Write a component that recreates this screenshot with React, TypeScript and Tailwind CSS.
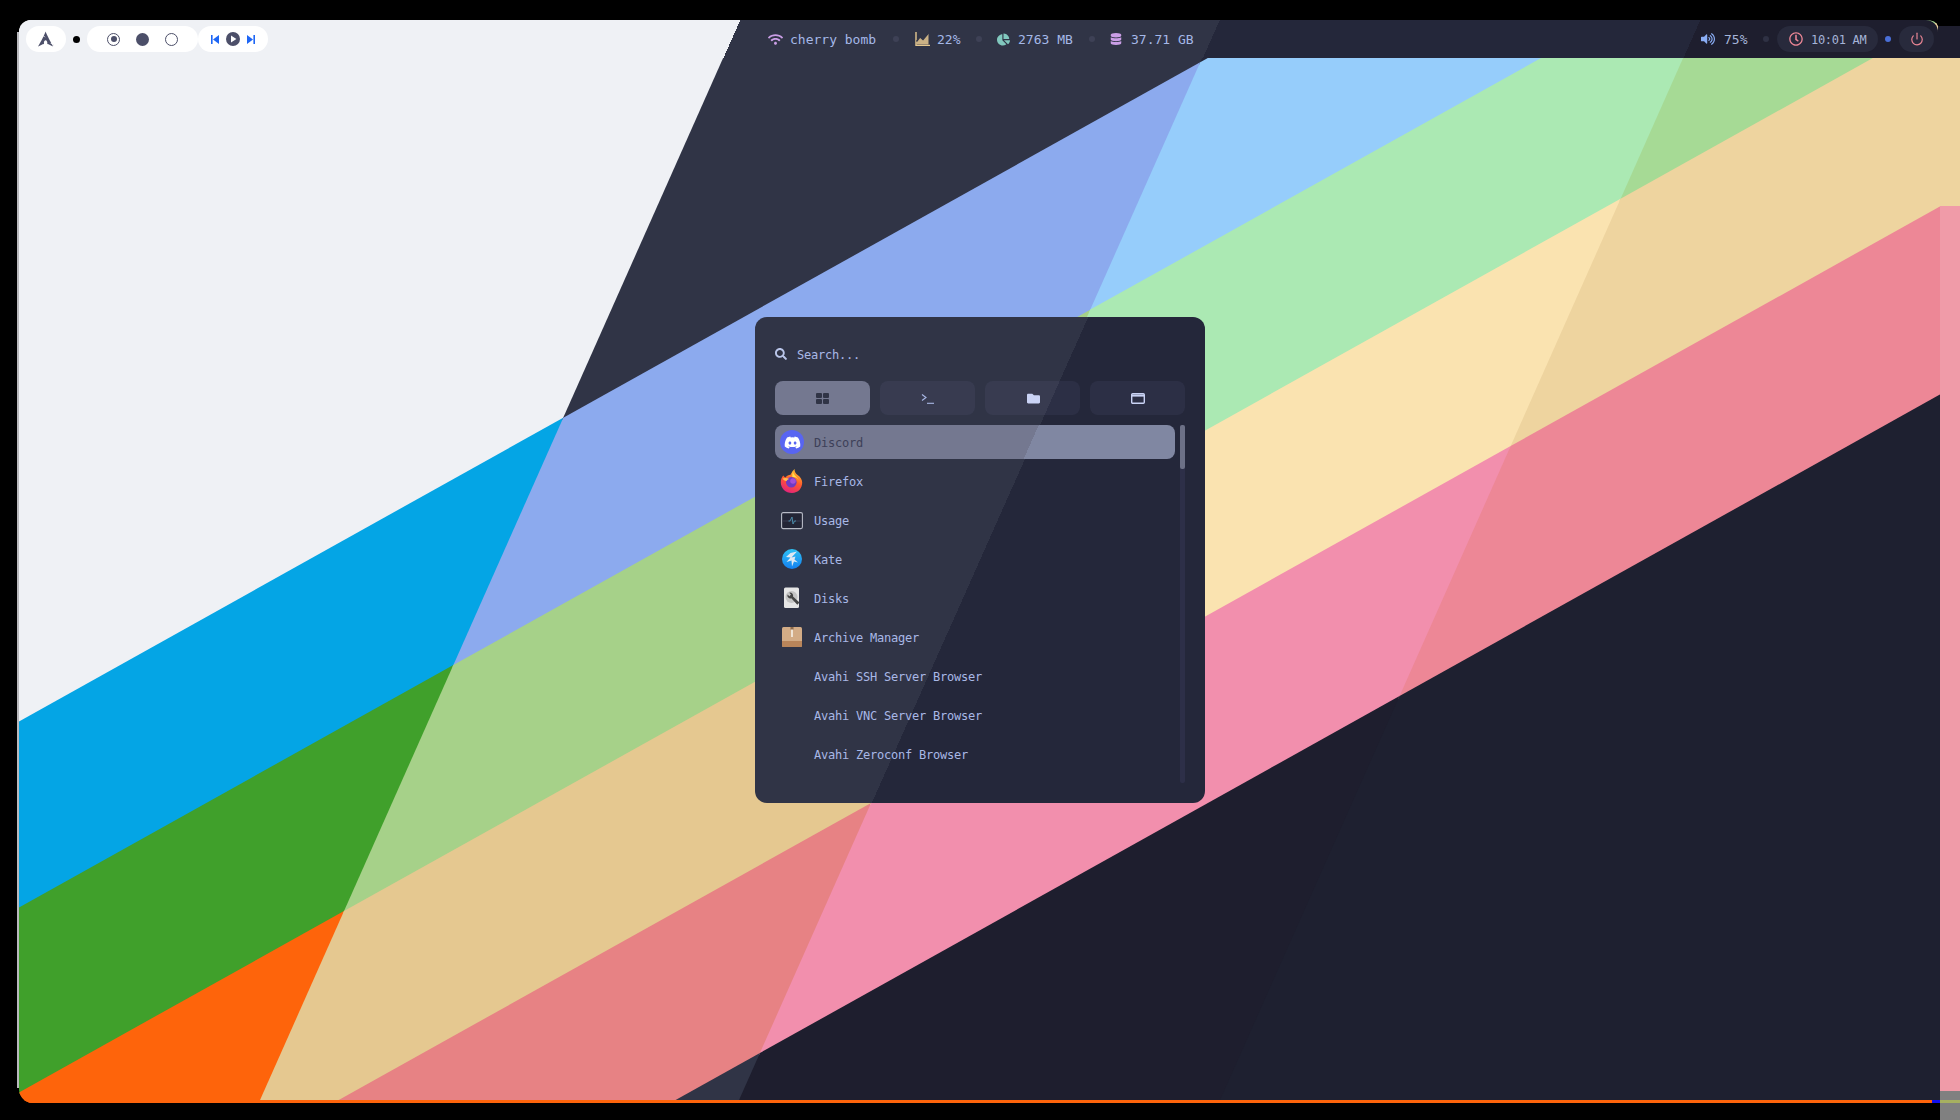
import { FaChartPie, FaDatabase, FaFolder, FaRegClock, FaSearch, FaVolumeUp, FaWifi, FaDiscord } from "react-icons/fa";
import { SiArchlinux } from "react-icons/si";
import { Power } from "lucide-react";

const SLOPE = 0.558;
const SHEAR = 0.4444;
const bandEdges = [-2000, 732, 918, 1103, 1289, 1477, 4000];

const regions = [
  { x0: -2000, x1: 740, colors: ["#eff1f5", "#04a5e5", "#40a02b", "#fe640b", "#e64553", "#eff1f5"] },
  { x0: 740, x1: 1219, colors: ["#303446", "#8caaee", "#a6d189", "#e5c890", "#e78284", "#303446"] },
  { x0: 1219, x1: 1700, colors: ["#24273a", "#96cdfb", "#abe9b3", "#fae3b0", "#f28fad", "#1e1e2e"] },
  { x0: 1700, x1: 4000, colors: ["#1e1e2e", "#8aadf4", "#a6da95", "#eed49f", "#ed8796", "#1e2030"] },
];

// where a region edge (x at y=20) crosses a band edge (y at x=0)
function corner(x0: number, c: number) {
  const x = (x0 - SHEAR * (c - 20)) / (1 - SHEAR * SLOPE);
  return `${x},${c - SLOPE * x}`;
}

function Wallpaper() {
  return (
    <svg className="absolute inset-0" width="1960" height="1120" viewBox="0 0 1960 1120">
      <defs>
        <clipPath id="screen">
          <path d="M19 32a12 12 0 0 1 12-12H1926Q1936 20 1938 26H1960V1120H1940V1103H32a14 14 0 0 1-13-13Z" />
        </clipPath>
      </defs>
      <g clipPath="url(#screen)">
        {/* each piece runs 2px under the next one, so no seam shows */}
        {regions.map((r, i) =>
          r.colors.map((c, j) => {
            const top = bandEdges[j];
            const bottom = bandEdges[j + 1] + 2;
            return (
              <polygon
                key={`${i}-${j}`}
                fill={c}
                points={`${corner(r.x0, top)} ${corner(r.x1 + 2, top)} ${corner(r.x1 + 2, bottom)} ${corner(r.x0, bottom)}`}
              />
            );
          }),
        )}
        {/* edge of the second monitor */}
        <rect x="1938" y="26" width="22" height="32" fill="#1e1e2e" />
        <rect x="1940" y="58" width="20" height="148" fill="#eed49f" />
        <rect x="1940" y="206" width="20" height="885" fill="#f09ba8" />
        <rect x="1940" y="1091" width="20" height="29" fill="#808080" />
        <rect x="1940" y="1100" width="20" height="3" fill="#a6b060" />
        <rect x="19" y="1100" width="1913" height="3" fill="#fe640b" />
        <rect x="1932" y="1100" width="8" height="7" fill="#1010f0" />
      </g>
      <rect x="17" y="32" width="2" height="1056" fill="#b9b9bd" />
    </svg>
  );
}

function Dot({ className }: { className: string }) {
  return <span className={`h-[6px] w-[6px] shrink-0 rounded-full ${className}`} />;
}

function ChartIcon() {
  return (
    <svg width="15" height="14" viewBox="0 0 15 14" fill="none">
      <path d="M1.500 9 5 5l3 2.500L13.500 1.500V12.500h-12Z" fill="#e5c890" fillOpacity="0.85" />
      <path d="M1 0v13.500h14" stroke="#e5c890" strokeWidth="1.400" />
      <path d="M1.500 9.500 5 5l3 2.500L13.500 1" stroke="#303446" strokeWidth="1.300" />
    </svg>
  );
}

function SkipIcon({ flip }: { flip?: boolean }) {
  return (
    <svg width="8" height="9" viewBox="0 0 8 9" className={flip ? "-scale-x-100" : ""}>
      <rect x="0" y="0" width="1.600" height="9" fill="#1e66f5" />
      <path d="M8 0v9L2 4.500Z" fill="#1e66f5" />
    </svg>
  );
}

function LeftModules() {
  return (
    <div className="flex items-center">
      <div className="flex h-[26px] w-[40px] items-center justify-center rounded-full bg-white">
        <SiArchlinux className="text-[16px] text-[#4c4f69]" />
      </div>
      <span className="ml-[7px] mr-[7px] h-[7px] w-[7px] rounded-full bg-black" />
      <div className="flex h-[26px] w-[111px] items-center justify-center gap-[16px] rounded-full bg-white">
        <span className="flex h-[13px] w-[13px] items-center justify-center rounded-full border-[1.5px] border-[#4c4f69]">
          <span className="h-[6px] w-[6px] rounded-full bg-[#4c4f69]" />
        </span>
        <span className="h-[13px] w-[13px] rounded-full bg-[#4c4f69]" />
        <span className="h-[13px] w-[13px] rounded-full border-[1.5px] border-[#4c4f69]" />
      </div>
      <div className="flex h-[26px] w-[70px] items-center justify-center gap-[7px] rounded-full bg-white">
        <SkipIcon />
        <svg width="14" height="14" viewBox="0 0 14 14">
          <circle cx="7" cy="7" r="7" fill="#4c4f69" />
          <path d="M5 3.600v6.800L10.400 7Z" fill="#fff" />
        </svg>
        <SkipIcon flip />
      </div>
    </div>
  );
}

function CenterModules() {
  return (
    <div className="ml-[500px] flex items-center whitespace-nowrap text-[#a5b8e8]">
      <FaWifi className="mr-[7px] text-[15px] text-[#ca9ee6]" />
      <span className="w-[87px] pt-[1px]">cherry bomb</span>
      <Dot className="mx-[16px] bg-[#3e4156]" />
      <ChartIcon />
      <span className="ml-[7px] w-[24px] pt-[1px]">22%</span>
      <Dot className="mx-[15px] bg-[#3e4156]" />
      <FaChartPie className="text-[13px] text-[#81c8be]" />
      <span className="ml-[8px] w-[56px] pt-[1px]">2763 MB</span>
      <Dot className="mx-[15px] bg-[#3e4156]" />
      <FaDatabase className="text-[12px] text-[#ca9ee6]" />
      <span className="ml-[9px] pt-[1px]">37.71 GB</span>
    </div>
  );
}

function RightModules() {
  return (
    <div className="ml-auto flex items-center whitespace-nowrap text-[#a5b4d8]">
      <FaVolumeUp className="mr-[9px] text-[14px] text-[#8aadf4]" />
      <span className="w-[24px] pt-[1px]">75%</span>
      <Dot className="ml-[15px] mr-[8px] bg-[#2f3144]" />
      <div className="flex h-[26px] w-[101px] items-center gap-[8px] rounded-full bg-[#282a3c] pl-[12px]">
        <FaRegClock className="text-[14px] text-[#ed8796]" />
        <span className="pt-[1px] text-[12px] tracking-[-0.3px]">10:01 AM</span>
      </div>
      <Dot className="ml-[7px] mr-[8px] bg-[#4a6fd8]" />
      <div className="flex h-[26px] w-[35px] items-center justify-center rounded-full bg-[#282a3c]">
        <Power size={14} color="#ed8796" strokeWidth={2} />
      </div>
    </div>
  );
}

function FirefoxIcon() {
  return (
    <svg width="24" height="24" viewBox="0 0 24 24">
      <defs>
        <linearGradient id="ff" x1="0.7" y1="0" x2="0.3" y2="1">
          <stop offset="0" stopColor="#ffc22e" />
          <stop offset="0.5" stopColor="#ff5a2c" />
          <stop offset="1" stopColor="#e2207f" />
        </linearGradient>
      </defs>
      <path
        d="M12 24C5.500 24 .8 19.200.8 13.200c0-2.600.9-5 2.400-6.700.6 1 1.400 1.600 2.300 1.900 1.200-1.500 3.200-2.400 5-2.600 1-1.900 2.500-4.300 4.100-5.800-.2 2.500.8 4.400 3 6 2.900 2 4.600 4.600 4.600 7.600C22.200 19.400 18.200 24 12 24Z"
        fill="url(#ff)"
      />
      <path d="M13 1.500c-.2 2.400 1 4.400 3.200 6.300 1 1 2 2.300 2.600 3.700-1.500-2.600-3.800-3.700-6.500-3.400.1-2.600.2-4.500.7-6.600Z" fill="#ffe14d" />
      <circle cx="11.300" cy="13.300" r="5.300" fill="#6e3bc4" />
      <circle cx="13" cy="12" r="2.800" fill="#a24fd8" />
      <path d="M2.500 9.500c2-.8 4.500-.8 6.800.4-1.300.3-2.300 1-2.700 2-1.500.3-3-.8-4.100-2.400Z" fill="#ffbd4f" />
    </svg>
  );
}

function UsageIcon() {
  return (
    <svg width="22" height="18" viewBox="0 0 22 18" className="translate-y-[1px]">
      <rect x="0.600" y="0.600" width="20.800" height="16" rx="1.500" fill="#232536" stroke="#b7bac6" strokeWidth="1.100" />
      <path d="M1 9h20" stroke="#3a3d52" strokeWidth="1" />
      <path d="M7.500 9H9l2-4 1 7 1.500-3h1.500" fill="none" stroke="#4b8aa8" strokeWidth="1" />
    </svg>
  );
}

function KateIcon() {
  return (
    <svg width="20" height="20" viewBox="0 0 20 20">
      <defs>
        <linearGradient id="kate" x1="0" y1="0" x2="0" y2="1">
          <stop offset="0" stopColor="#2fc2f5" />
          <stop offset="1" stopColor="#1480ef" />
        </linearGradient>
      </defs>
      <circle cx="10" cy="10" r="10" fill="url(#kate)" />
      <path d="M15 2.500 8.500 4 4 8l4.500.5L4.500 13l5-1.500.5 6 2-5 4 1-3.500-3 1-3-4 1Z" fill="#dfe8f2" />
    </svg>
  );
}

function DisksIcon() {
  return (
    <svg width="18" height="22" viewBox="0 0 18 22">
      <rect x="1" y="0.500" width="15" height="20.500" rx="1.500" fill="#e6e6e6" />
      <circle cx="8.500" cy="10" r="6" fill="#c4c4c4" />
      <path d="M4.500 7.500a3 3 0 0 0 3.800 3.800l6 6.500 2.200-2.200-6.500-6A3 3 0 0 0 6.200 5.800L8 7.600 6.400 9.200Z" fill="#454545" />
    </svg>
  );
}

function ArchiveIcon() {
  return (
    <svg width="20" height="20" viewBox="0 0 20 20">
      <rect width="20" height="20" rx="1.500" fill="#d3ac86" />
      <path d="M0 14h20v4.500a1.500 1.500 0 0 1-1.500 1.500h-17A1.500 1.500 0 0 1 0 18.500Z" fill="#b9855a" />
      <rect x="9" y="0" width="2" height="10" fill="#efe3d4" />
      <rect x="8.500" y="0" width="3" height="2.500" fill="#8d6a4a" />
    </svg>
  );
}

const apps = [
  { name: "Discord", icon: <span className="flex h-[24px] w-[24px] items-center justify-center rounded-full bg-[#5865f2]"><FaDiscord className="text-[17px] text-white" /></span> },
  { name: "Firefox", icon: <FirefoxIcon /> },
  { name: "Usage", icon: <UsageIcon /> },
  { name: "Kate", icon: <KateIcon /> },
  { name: "Disks", icon: <DisksIcon /> },
  { name: "Archive Manager", icon: <ArchiveIcon /> },
  { name: "Avahi SSH Server Browser", icon: null },
  { name: "Avahi VNC Server Browser", icon: null },
  { name: "Avahi Zeroconf Browser", icon: null },
];

function Launcher() {
  return (
    <div className="absolute inset-0 flex items-center justify-center">
      <div className="flex h-[486px] w-[450px] flex-col rounded-[12px] bg-[linear-gradient(114deg,#303446_50%,#24273a_50%)] px-[20px] text-[12px] tracking-[-0.22px] text-[#a9b8e6]">
        <div className="flex h-[64px] shrink-0 items-center pt-[10px]">
          <FaSearch className="text-[12px] text-[#bac6ea]" />
          <span className="ml-[10px] pt-[2px]">Search...</span>
        </div>
        <div className="grid shrink-0 grid-cols-4 gap-[10px]">
          <div className="flex h-[34px] items-center justify-center rounded-[8px] bg-[#747890]">
            <svg width="13" height="11" viewBox="0 0 13 11" fill="#303446">
              <rect width="6" height="5" rx="1" />
              <rect x="7" width="6" height="5" rx="1" />
              <rect y="6" width="6" height="5" rx="1" />
              <rect x="7" y="6" width="6" height="5" rx="1" />
            </svg>
          </div>
          <div className="flex h-[34px] items-center justify-center rounded-[8px] bg-[#b4befe]/[0.06]">
            <svg width="13" height="11" viewBox="0 0 13 11" fill="none" stroke="#a9b8e6" strokeWidth="1.100">
              <path d="M1 1.500 5 4.500 1 7.500" />
              <path d="M6 10.300h7" />
            </svg>
          </div>
          <div className="flex h-[34px] items-center justify-center rounded-[8px] bg-[#b4befe]/[0.06]">
            <FaFolder className="ml-[1px] text-[13px] text-[#cad3f5]" />
          </div>
          <div className="flex h-[34px] items-center justify-center rounded-[8px] bg-[#b4befe]/[0.06]">
            <svg width="14" height="11" viewBox="0 0 14 11" fill="none">
              <rect x="0.700" y="0.700" width="12.600" height="9.600" rx="1" stroke="#cad3f5" strokeWidth="1.400" />
              <path d="M1 2.600h12" stroke="#cad3f5" strokeWidth="2" />
            </svg>
          </div>
        </div>
        <div className="mt-[10px] flex min-h-0 gap-[5px]">
          <div className="flex w-[400px] flex-col gap-[5px]">
            {apps.map((app, i) => (
              <div
                key={app.name}
                className={
                  i === 0
                    ? "flex h-[34px] items-center rounded-[8px] bg-[linear-gradient(114deg,#747890_241px,#8087a2_241px)] text-[#3d4058]"
                    : "flex h-[34px] items-center rounded-[8px]"
                }
              >
                <span className="ml-[5px] flex h-[24px] w-[24px] items-center justify-center">{app.icon}</span>
                <span className="ml-[10px] pt-[2px]">{app.name}</span>
              </div>
            ))}
          </div>
          <div className="h-[358px] w-[5px] rounded-[2px] bg-[#2d2f48]">
            <div className="h-[44px] w-[5px] rounded-[2px] bg-[#6c7086]" />
          </div>
        </div>
      </div>
    </div>
  );
}

export default function App() {
  return (
    <div className="relative h-[1120px] w-[1960px] overflow-hidden bg-black font-['DejaVu_Sans_Mono',monospace] text-[13px]">
      <Wallpaper />
      <div className="relative pl-[19px] pr-[22px] pt-[20px]">
        <div className="flex h-[38px] items-center rounded-t-[12px] bg-[linear-gradient(114deg,#eff1f5_659px,#303446_659px,#303446_1097px,#24273a_1097px,#24273a_1536px,#1e1e2e_1536px)] pl-[7px] pr-[4px]">
          <LeftModules />
          <CenterModules />
          <RightModules />
        </div>
      </div>
      <Launcher />
    </div>
  );
}
